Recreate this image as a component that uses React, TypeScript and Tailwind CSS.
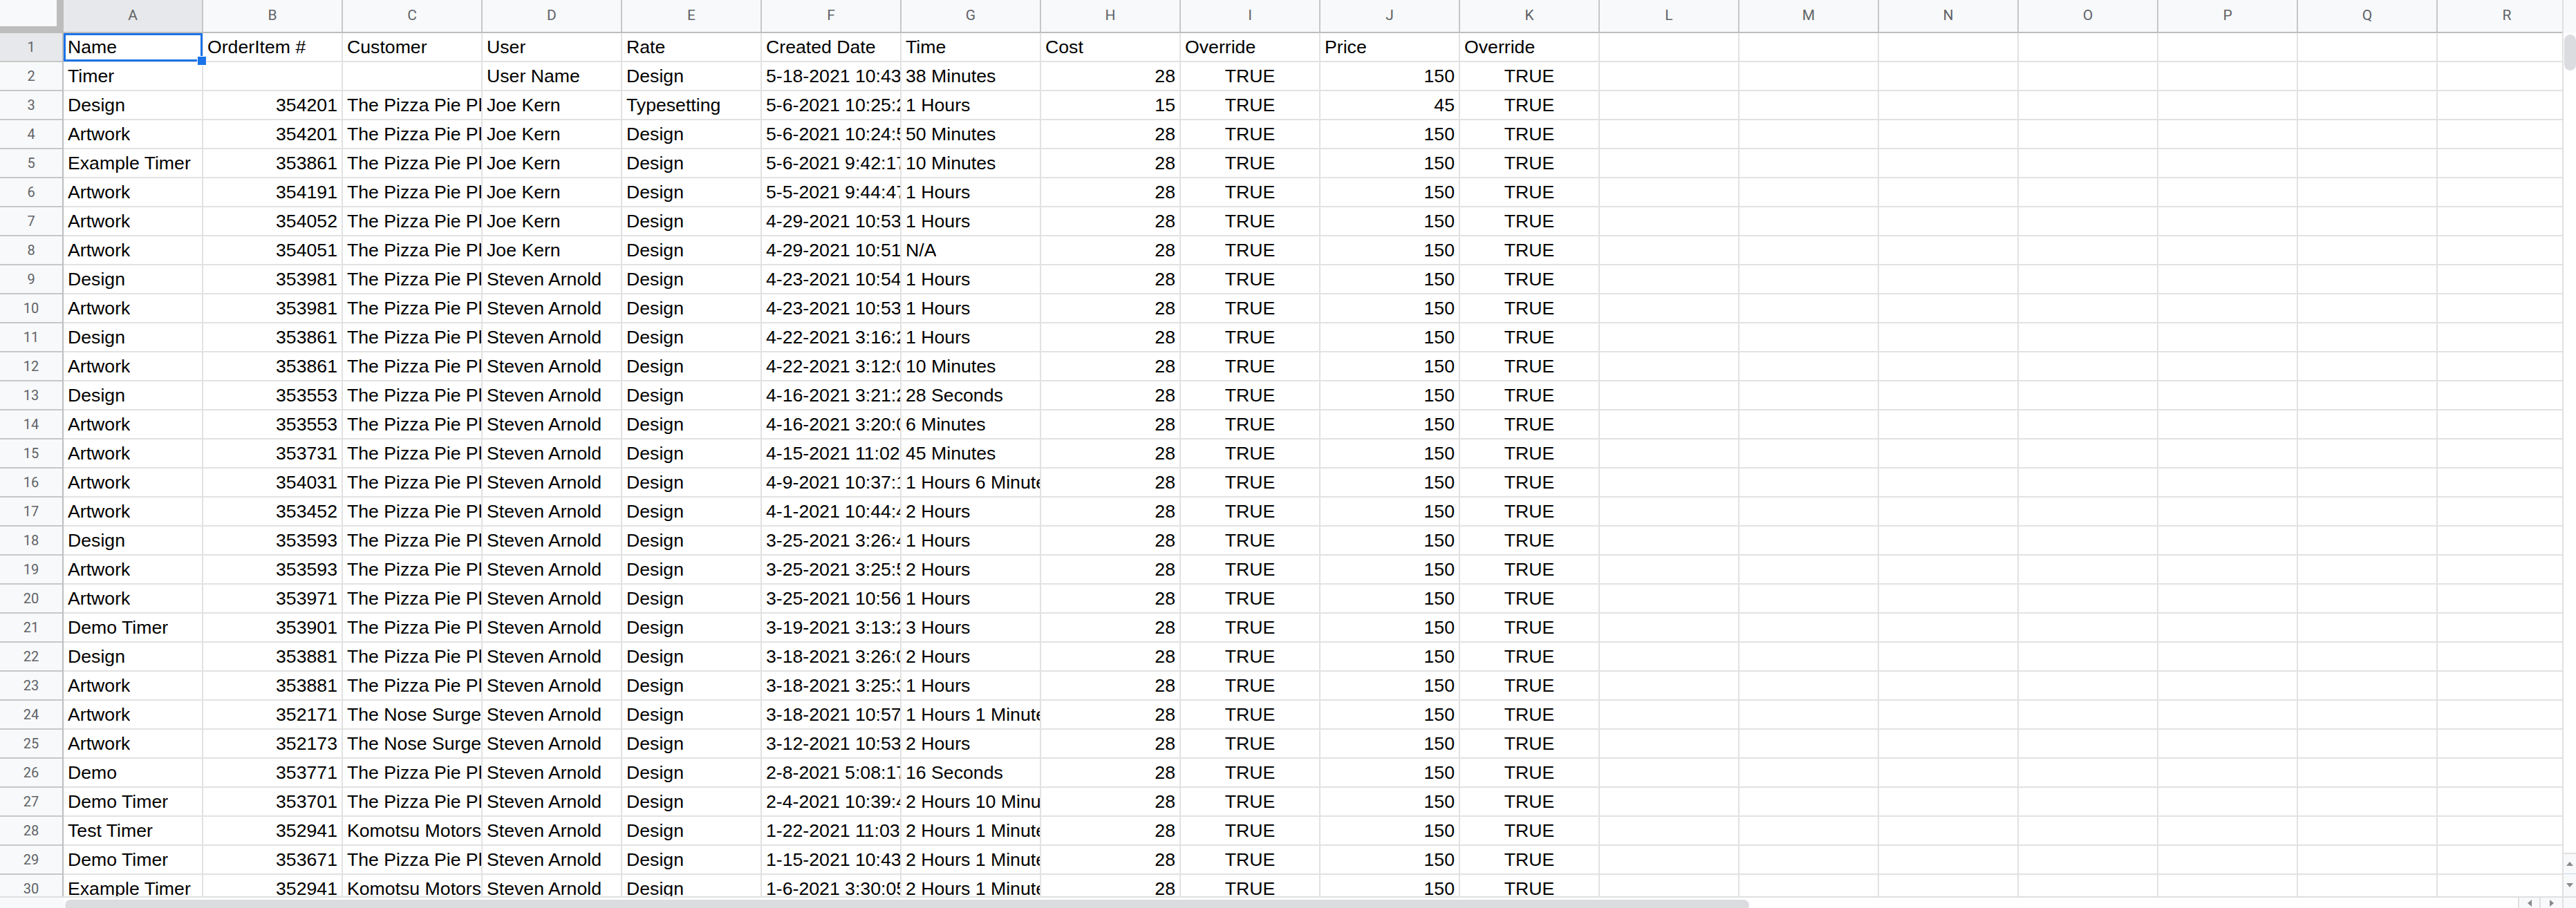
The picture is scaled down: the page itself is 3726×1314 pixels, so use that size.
import React from "react";

const letters = ["A", "B", "C", "D", "E", "F", "G", "H", "I", "J", "K", "L", "M", "N", "O", "P", "Q", "R"];

const PP = "The Pizza Pie Place";
const SA = "Steven Arnold";

const base: string[][] = [
  ["Timer", "", "", "User Name", "Design", "5-18-2021 10:43:55", "38 Minutes"],
  ["Design", "354201", PP, "Joe Kern", "Typesetting", "5-6-2021 10:25:21", "1 Hours"],
  ["Artwork", "354201", PP, "Joe Kern", "Design", "5-6-2021 10:24:53", "50 Minutes"],
  ["Example Timer", "353861", PP, "Joe Kern", "Design", "5-6-2021 9:42:17", "10 Minutes"],
  ["Artwork", "354191", PP, "Joe Kern", "Design", "5-5-2021 9:44:47", "1 Hours"],
  ["Artwork", "354052", PP, "Joe Kern", "Design", "4-29-2021 10:53:08", "1 Hours"],
  ["Artwork", "354051", PP, "Joe Kern", "Design", "4-29-2021 10:51:12", "N/A"],
  ["Design", "353981", PP, SA, "Design", "4-23-2021 10:54:31", "1 Hours"],
  ["Artwork", "353981", PP, SA, "Design", "4-23-2021 10:53:02", "1 Hours"],
  ["Design", "353861", PP, SA, "Design", "4-22-2021 3:16:25", "1 Hours"],
  ["Artwork", "353861", PP, SA, "Design", "4-22-2021 3:12:09", "10 Minutes"],
  ["Design", "353553", PP, SA, "Design", "4-16-2021 3:21:28", "28 Seconds"],
  ["Artwork", "353553", PP, SA, "Design", "4-16-2021 3:20:06", "6 Minutes"],
  ["Artwork", "353731", PP, SA, "Design", "4-15-2021 11:02:44", "45 Minutes"],
  ["Artwork", "354031", PP, SA, "Design", "4-9-2021 10:37:14", "1 Hours 6 Minutes"],
  ["Artwork", "353452", PP, SA, "Design", "4-1-2021 10:44:42", "2 Hours"],
  ["Design", "353593", PP, SA, "Design", "3-25-2021 3:26:41", "1 Hours"],
  ["Artwork", "353593", PP, SA, "Design", "3-25-2021 3:25:52", "2 Hours"],
  ["Artwork", "353971", PP, SA, "Design", "3-25-2021 10:56:10", "1 Hours"],
  ["Demo Timer", "353901", PP, SA, "Design", "3-19-2021 3:13:27", "3 Hours"],
  ["Design", "353881", PP, SA, "Design", "3-18-2021 3:26:03", "2 Hours"],
  ["Artwork", "353881", PP, SA, "Design", "3-18-2021 3:25:38", "1 Hours"],
  ["Artwork", "352171", "The Nose Surgeon", SA, "Design", "3-18-2021 10:57:21", "1 Hours 1 Minutes"],
  ["Artwork", "352173", "The Nose Surgeon", SA, "Design", "3-12-2021 10:53:40", "2 Hours"],
  ["Demo", "353771", PP, SA, "Design", "2-8-2021 5:08:17", "16 Seconds"],
  ["Demo Timer", "353701", PP, SA, "Design", "2-4-2021 10:39:42", "2 Hours 10 Minutes"],
  ["Test Timer", "352941", "Komotsu Motors", SA, "Design", "1-22-2021 11:03:11", "2 Hours 1 Minutes"],
  ["Demo Timer", "353671", PP, SA, "Design", "1-15-2021 10:43:32", "2 Hours 1 Minutes"],
  ["Example Timer", "352941", "Komotsu Motors", SA, "Design", "1-6-2021 3:30:05", "2 Hours 1 Minutes"],
];

const rows: string[][] = [
  ["Name", "OrderItem #", "Customer", "User", "Rate", "Created Date", "Time", "Cost", "Override", "Price", "Override"],
  ...base.map((r, i) => [...r, i === 1 ? "15" : "28", "TRUE", i === 1 ? "45" : "150", "TRUE"]),
];

// strings sit left, numbers right, booleans centred, as in the sheet
const alignFor = (v: string, row: number) => {
  if (row === 0) return "justify-start pl-[6px]";
  if (/^\d+$/.test(v)) return "justify-end pr-[6px]";
  if (v === "TRUE" || v === "FALSE") return "justify-center";
  return "justify-start pl-[6px]";
};

const Cell = ({ value, row }: { value: string; row: number }) => (
  <div
    className={`flex h-full w-[202px] shrink-0 items-end overflow-hidden whitespace-nowrap border-r-2 border-[#e2e2e2] pb-[5px] ${alignFor(value, row)}`}
  >
    <span className="block min-w-0 overflow-hidden whitespace-nowrap leading-[30px]">{value}</span>
  </div>
);

const Tri = ({ dir }: { dir: "up" | "down" | "left" | "right" }) => {
  const pts = {
    up: "0,7 5,1 10,7",
    down: "0,1 5,7 10,1",
    left: "7,0 1,5 7,10",
    right: "1,0 7,5 1,10",
  }[dir];
  const vertical = dir === "up" || dir === "down";
  return (
    <svg viewBox={vertical ? "0 0 10 8" : "0 0 8 10"} className={vertical ? "h-[8px] w-[10px]" : "h-[10px] w-[8px]"}>
      <polygon points={pts} fill="#8a8a8a" />
    </svg>
  );
};

export default function App() {
  return (
    <div className="flex h-[1314px] w-[3726px] flex-col overflow-hidden bg-white font-['Liberation_Sans',Arial,sans-serif] text-[26.67px] text-black">
      <div className="flex min-h-0 flex-1">
        {/* grid */}
        <div className="min-w-0 flex-1 overflow-hidden">
          {/* column header */}
          <div className="flex h-[48px]">
            <div className="flex h-[48px] w-[92px] shrink-0 bg-[#bdbdbd]">
              <div className="h-[38px] w-[82px] bg-[#f8f9fa]" />
            </div>
            {letters.map((l, i) => (
              <div
                key={l}
                className={`flex h-[48px] w-[202px] shrink-0 items-center justify-center border-r-2 border-b-2 border-r-[#c7c7c7] border-b-[#bdbdbd] font-['Roboto',Arial,sans-serif] text-[21px] text-[#5f6368] ${
                  i === 0 ? "bg-[#e6e8eb]" : "bg-[#f8f9fa]"
                }`}
              >
                {l}
              </div>
            ))}
          </div>
          {/* body */}
          {rows.map((r, ri) => (
            <div key={ri} className="relative flex h-[42px] border-b-2 border-[#e2e2e2]">
              <div
                className={`-mb-[2px] flex h-[42px] w-[92px] shrink-0 items-center justify-center border-r-2 border-b-2 border-r-[#bdbdbd] border-b-[#c7c7c7] font-['Roboto',Arial,sans-serif] text-[20px] text-[#5f6368] ${
                  ri === 0 ? "bg-[#e6e8eb]" : "bg-[#f8f9fa]"
                }`}
              >
                {ri + 1}
              </div>
              {letters.map((l, ci) => (
                <Cell key={l} value={r[ci] ?? ""} row={ri} />
              ))}
              {ri === 0 && (
                <>
                  <div className="pointer-events-none absolute left-[92px] top-0 z-10 h-[41px] w-[201px] border-[3px] border-[#1a73e8]" />
                  <div className="absolute left-[285px] top-[33px] z-20 h-[14px] w-[14px] border border-white bg-[#1a73e8]" />
                </>
              )}
            </div>
          ))}
        </div>
        {/* vertical scrollbar */}
        <div className="flex w-[20px] shrink-0 flex-col border-l-2 border-[#e0e0e0]">
          <div className="h-[48px] shrink-0 bg-[#f8f9fa]" />
          <div className="flex-1 pl-[1px] pt-[2px]">
            <div className="h-[52px] w-[17px] rounded-full bg-[#dadce0]" />
          </div>
          <div className="flex h-[30px] shrink-0 items-center justify-center border-t-2 border-[#e0e0e0] bg-[#f8f9fa]">
            <Tri dir="up" />
          </div>
          <div className="flex h-[33px] shrink-0 items-center justify-center border-t border-[#c6d4f5] bg-[#f8f9fa]">
            <Tri dir="down" />
          </div>
        </div>
      </div>
      {/* horizontal scrollbar */}
      <div className="flex h-[17px] shrink-0 border-t-2 border-[#e0e0e0]">
        <div className="w-[92px] shrink-0 bg-[#f8f9fa]" />
        <div className="flex-1 pl-[2px] pt-[3px]">
          <div className="h-[16px] w-[2436px] rounded-full bg-[#dadce0]" />
        </div>
        <div className="flex w-[31px] shrink-0 items-center justify-center border-l-2 border-[#e0e0e0] bg-[#f8f9fa]">
          <Tri dir="left" />
        </div>
        <div className="flex w-[33px] shrink-0 items-center justify-center border-l-2 border-[#e0e0e0] bg-[#f8f9fa]">
          <Tri dir="right" />
        </div>
        <div className="w-[20px] shrink-0 border-l-2 border-[#e0e0e0] bg-[#f8f9fa]" />
      </div>
    </div>
  );
}
